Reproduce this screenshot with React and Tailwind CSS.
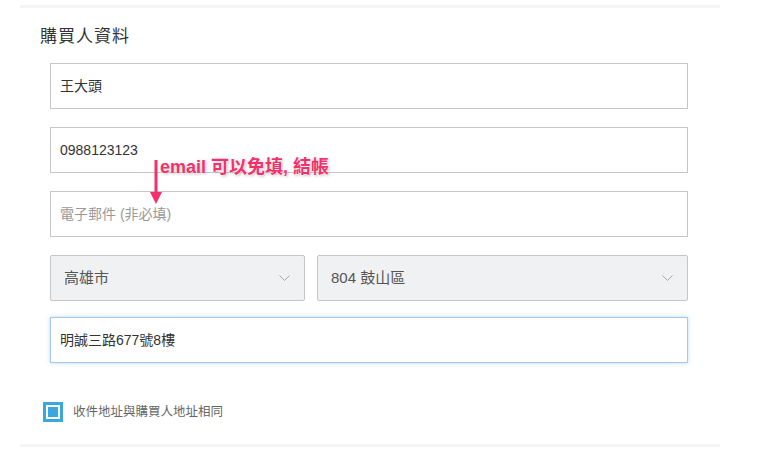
import React from 'react';

const font = { fontFamily: '"Liberation Sans", "Noto Sans CJK TC", sans-serif' };

const Chevron = () => (
    <svg width="11" height="6" viewBox="0 0 11 6" fill="none" className="shrink-0">
        <path d="M0.5 0.5 L5.5 5.5 L10.5 0.5" stroke="#a8a8a8" strokeWidth="1" />
    </svg>
);

const Field = ({ value, placeholder, focused }) => (
    <div
        className={`h-[46px] w-[638px] flex items-center px-[9px] text-[14px] bg-white border ${focused ? 'border-[#a8c8ea] shadow-[0_0_4px_rgba(102,175,233,0.45)]' : 'border-[#c6c6c6]'}`}
    >
        {value ? <span className="text-[#333]">{value}</span> : <span className="text-[#999]">{placeholder}</span>}
    </div>
);

const SelectBox = ({ value, width }) => (
    <div className={`h-[46px] ${width} flex items-center justify-between pl-[13px] pr-[14px] bg-[#f0f1f3] border border-[#c6c6c6] rounded-[2px] text-[15px] text-[#555]`}>
        <span>{value}</span>
        <Chevron />
    </div>
);

export default function App() {
    return (
        <div className="w-[774px] h-[452px] bg-white relative overflow-hidden" style={font}>
            <div className="ml-[20px] w-[700px] pt-[5px]">
                <div className="h-[3px] bg-[#f4f4f4]"></div>

                <div className="pl-[20px] pt-[19px]">
                    <h3 className="text-[17px] leading-[20px] tracking-[1px] text-[#333]">購買人資料</h3>
                </div>

                <div className="pl-[30px] pt-[16px] flex flex-col gap-[18px]">
                    <Field value="王大頭" />
                    <Field value="0988123123" />
                    <Field placeholder="電子郵件 (非必填)" />
                    <div className="flex gap-[12px]">
                        <SelectBox value="高雄市" width="w-[255px]" />
                        <SelectBox value="804 鼓山區" width="w-[371px]" />
                    </div>
                    <div className="-mt-[2px]">
                        <Field value="明誠三路677號8樓" focused />
                    </div>
                </div>

                <div className="pl-[23px] pt-[39px] flex items-center gap-[10px]">
                    <div className="w-[20px] h-[20px] border-[3px] border-[#3ba7df] flex items-center justify-center">
                        <div className="w-[10px] h-[10px] bg-[#3ba7df]"></div>
                    </div>
                    <span className="text-[12.5px] text-[#666]">收件地址與購買人地址相同</span>
                </div>

                <div className="mt-[22px] h-[3px] bg-[#f4f4f4]"></div>
            </div>

            {/* annotation overlay */}
            <div className="absolute left-[148px] top-[158px]">
                <svg width="16" height="48" viewBox="0 0 16 48">
                    <rect x="6.5" y="2" width="3" height="36" fill="#f2306c" />
                    <path d="M2 34 L14 34 L8 46 Z" fill="#f2306c" />
                </svg>
            </div>
            <div className="absolute left-[160px] top-[156px] text-[18px] leading-[22px] font-bold text-[#f2306c] [text-shadow:0_0_2px_#fff,0_0_2px_#fff,1px_1px_3px_rgba(0,0,0,0.35)]">
                email 可以免填, 結帳
            </div>
        </div>
    );
}
